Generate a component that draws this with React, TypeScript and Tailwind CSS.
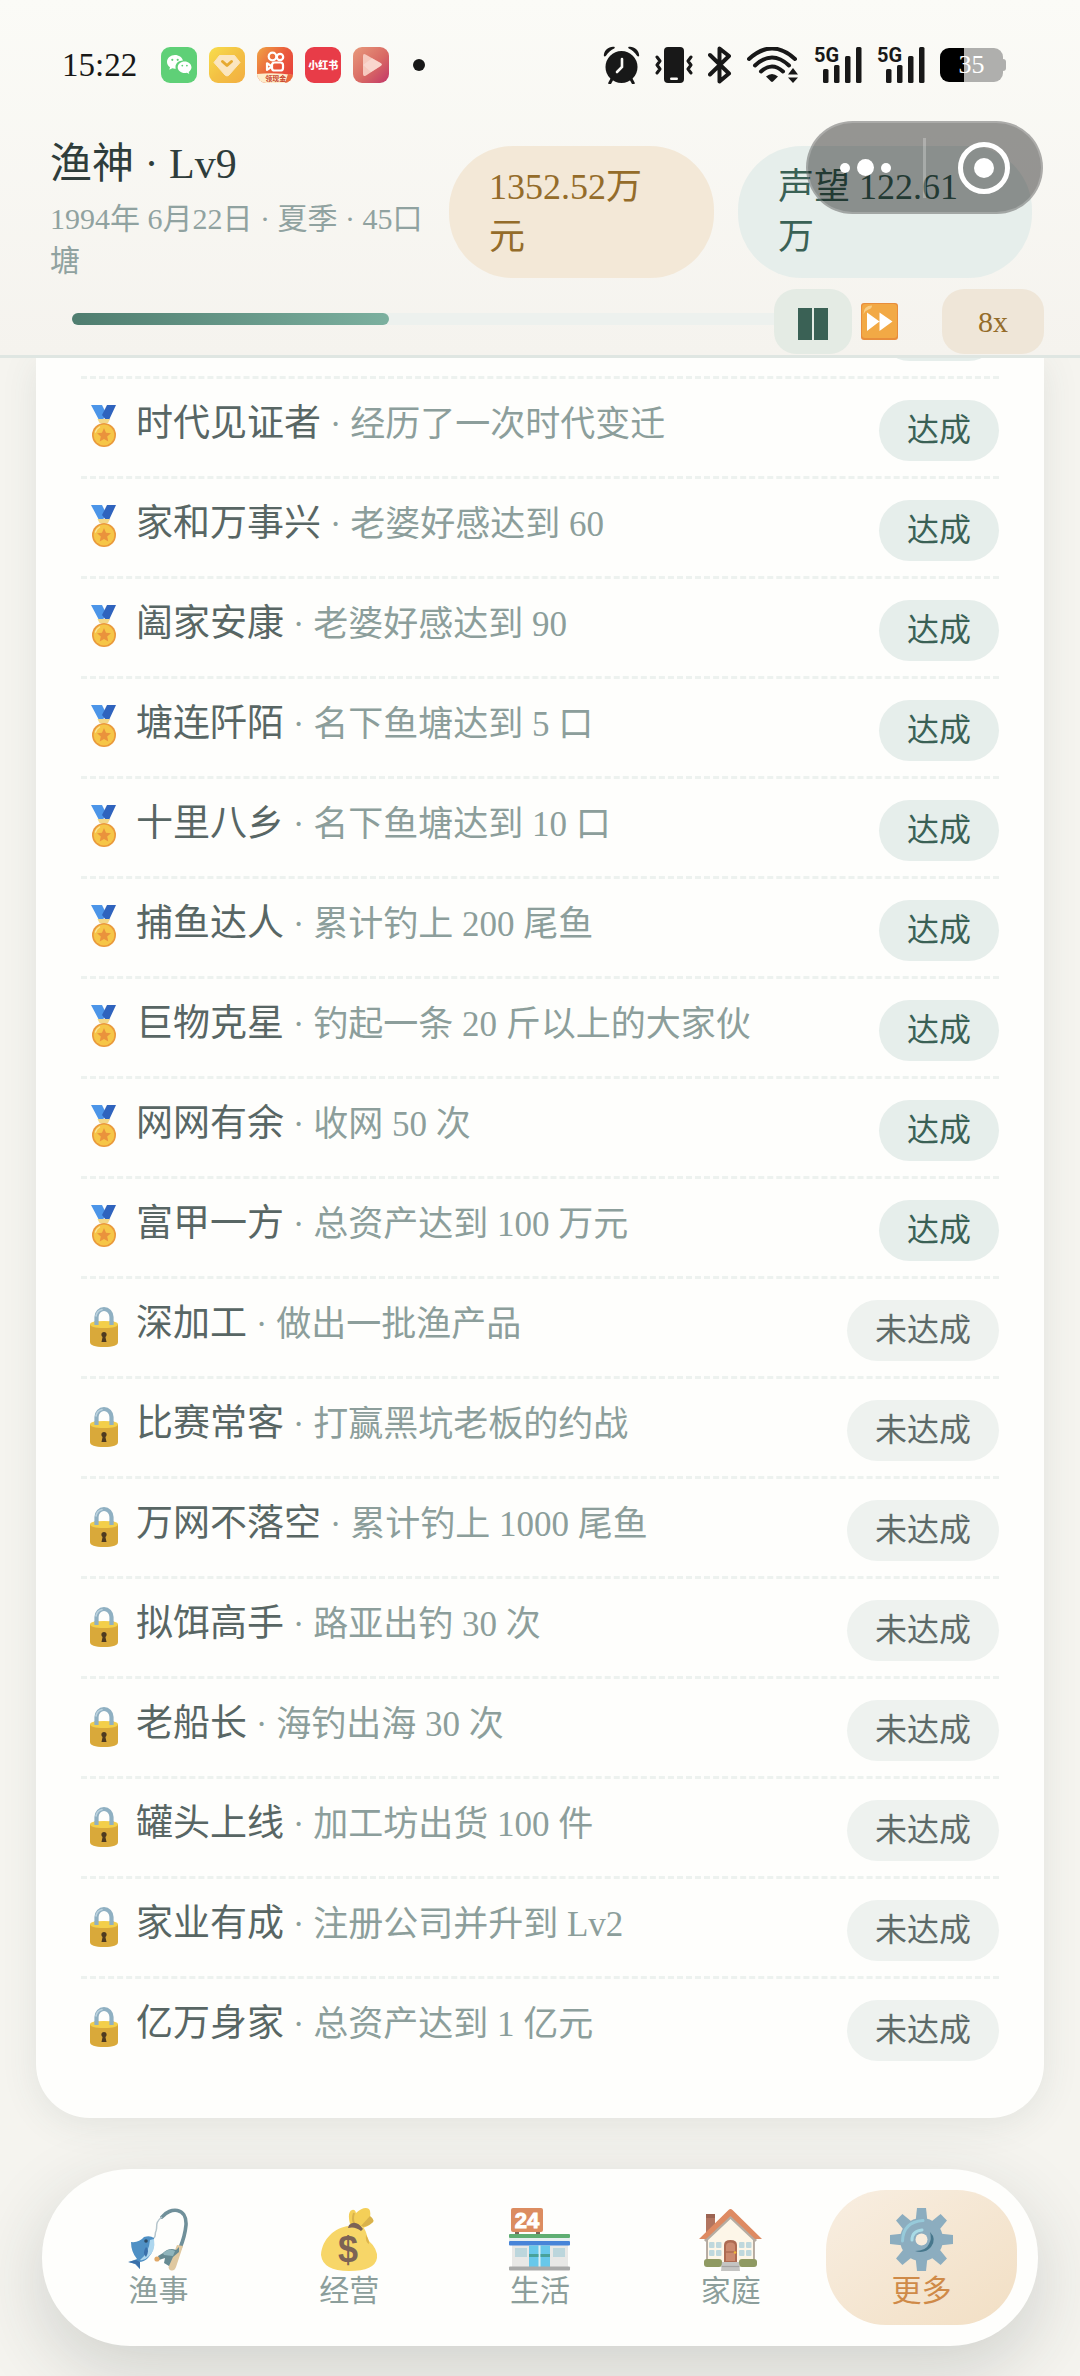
import type { ReactNode } from "react";

type Achievement = {
  name: string;
  desc: string;
  done: boolean;
};

const achievements: Achievement[] = [
  { name: "时代见证者", desc: "经历了一次时代变迁", done: true },
  { name: "家和万事兴", desc: "老婆好感达到 60", done: true },
  { name: "阖家安康", desc: "老婆好感达到 90", done: true },
  { name: "塘连阡陌", desc: "名下鱼塘达到 5 口", done: true },
  { name: "十里八乡", desc: "名下鱼塘达到 10 口", done: true },
  { name: "捕鱼达人", desc: "累计钓上 200 尾鱼", done: true },
  { name: "巨物克星", desc: "钓起一条 20 斤以上的大家伙", done: true },
  { name: "网网有余", desc: "收网 50 次", done: true },
  { name: "富甲一方", desc: "总资产达到 100 万元", done: true },
  { name: "深加工", desc: "做出一批渔产品", done: false },
  { name: "比赛常客", desc: "打赢黑坑老板的约战", done: false },
  { name: "万网不落空", desc: "累计钓上 1000 尾鱼", done: false },
  { name: "拟饵高手", desc: "路亚出钓 30 次", done: false },
  { name: "老船长", desc: "海钓出海 30 次", done: false },
  { name: "罐头上线", desc: "加工坊出货 100 件", done: false },
  { name: "家业有成", desc: "注册公司并升到 Lv2", done: false },
  { name: "亿万身家", desc: "总资产达到 1 亿元", done: false },
];

const dayProgress = 44;

/* ---------- Status bar ---------- */

function WeChatIcon() {
  return (
    <svg viewBox="0 0 36 36" className="w-9 h-9">
      <rect width="36" height="36" rx="9" fill="#5fd077" />
      <path d="M14 8C9.500 8 6 11 6 14.900c0 2.200 1.200 4.100 3 5.400l-.7 2.500 3-1.500c.9.200 1.800.4 2.700.4h.8c-.2-.6-.3-1.200-.3-1.800 0-3.600 3.400-6.400 7.400-6.400C21.100 10.300 17.900 8 14 8z" fill="#fff" />
      <path d="M30.500 20.300c0-3.200-3.200-5.800-6.900-5.800s-6.900 2.600-6.900 5.800 3.200 5.800 6.900 5.800c.8 0 1.600-.1 2.300-.3l2.400 1.300-.6-2.100c1.700-1.200 2.800-2.800 2.800-4.700z" fill="#fff" />
      <g fill="#5fd077">
        <circle cx="11.300" cy="12.800" r="1.100" />
        <circle cx="16.700" cy="12.800" r="1.100" />
        <circle cx="21.300" cy="18.600" r="0.900" />
        <circle cx="25.900" cy="18.600" r="0.900" />
      </g>
    </svg>
  );
}

function DiamondIcon() {
  return (
    <svg viewBox="0 0 36 36" className="w-9 h-9">
      <defs>
        <linearGradient id="diamondBg" x1="0" y1="0" x2="1" y2="1">
          <stop offset="0" stopColor="#f8de4c" />
          <stop offset="0.500" stopColor="#f3c144" />
          <stop offset="1" stopColor="#f3ae42" />
        </linearGradient>
      </defs>
      <rect width="36" height="36" rx="9" fill="url(#diamondBg)" />
      <path d="M10.500 8.500h15l5.500 7-11 12.500q-2 2-4 0L5 15.500z" fill="#fbe6c0" stroke="#fbe6c0" strokeLinejoin="round" />
      <path d="M13.500 14.500l4.500 4 4.500-4" fill="none" stroke="#e6a930" strokeWidth="3" strokeLinecap="round" strokeLinejoin="round" />
    </svg>
  );
}

function KuaishouIcon() {
  return (
    <span className="relative block w-9 h-9 rounded-[9px] overflow-hidden">
      <svg viewBox="0 0 36 36" className="w-9 h-9">
        <defs>
          <linearGradient id="ksBg" x1="0" y1="0" x2="1" y2="0.700">
            <stop offset="0" stopColor="#f0a544" />
            <stop offset="0.600" stopColor="#ea5a3c" />
            <stop offset="1" stopColor="#e8433c" />
          </linearGradient>
        </defs>
        <rect width="36" height="36" fill="url(#ksBg)" />
        <g fill="none" stroke="#fff" strokeWidth="2.200">
          <circle cx="15.500" cy="9.500" r="3.800" />
          <circle cx="23" cy="10" r="3.200" />
          <rect x="15" y="15.500" width="11" height="8" rx="2.600" />
          <path d="M15 19.500l-5-3.200v6.600z" strokeLinejoin="round" />
        </g>
        <path d="M0 27q18-2 36 1v8H0z" fill="#fdeccb" />
        <path d="M28 36l3-9 5 1v8z" fill="#ea6a3a" />
      </svg>
      <span className="absolute bottom-0 left-2 text-[7px] leading-[8px] font-bold text-[#c8452d]">领现金</span>
    </span>
  );
}

function RedNoteIcon() {
  return (
    <span className="flex items-center justify-center w-9 h-9 rounded-[9px] bg-[#e83c48] text-white text-[10px] leading-none font-black whitespace-nowrap font-['Noto_Sans_CJK_SC',sans-serif]">
      小红书
    </span>
  );
}

function PlayerIcon() {
  return (
    <svg viewBox="0 0 36 36" className="w-9 h-9">
      <defs>
        <linearGradient id="playBg" x1="0" y1="0" x2="1" y2="1">
          <stop offset="0" stopColor="#e89a7c" />
          <stop offset="0.550" stopColor="#d96a64" />
          <stop offset="1" stopColor="#c23668" />
        </linearGradient>
      </defs>
      <rect width="36" height="36" rx="9" fill="url(#playBg)" />
      <path d="M10 9q0-3 2.600-1.500L28 16.300q1.800 1.200 0 2.500L13 28.500Q10 30 10 27z" fill="#f6c9be" />
      <path d="M10 18L19 11.300l9 5q1.800 1.200 0 2.500L18 25z" fill="#fbe0d8" opacity="0.600" />
    </svg>
  );
}

function AlarmIcon() {
  return (
    <svg viewBox="0 0 37 38" className="w-[37px] h-[38px]">
      <circle cx="18.500" cy="21" r="16" fill="#181818" />
      <path d="M.8 9.500C1 4 6 .2 11 .8 12 1 12 2 11.200 2.500 8 4 5 6.500 3 9.700c-.8 1-2 .9-2.200-.2zM36.200 9.500C36 4 31 .2 26 .8c-1 .2-1 1.200-.2 1.700 3.200 1.500 6.200 4 8.200 7.200.8 1 2 .9 2.200-.2z" fill="#181818" />
      <path d="M9 33l-2.200 4M28 33l2.200 4" stroke="#181818" strokeWidth="3" strokeLinecap="round" />
      <path d="M19 13v8l-5 5" fill="none" stroke="#fbfaf7" strokeWidth="2.600" strokeLinecap="round" />
    </svg>
  );
}

function VibrateIcon() {
  return (
    <svg viewBox="0 0 38 36" className="w-[38px] h-9">
      <rect x="9" width="20" height="36" rx="4" fill="#181818" />
      <rect x="15" y="30.500" width="8" height="2.400" rx="1.200" fill="#fbfaf7" />
      <path d="M2 10l3 4-3 4 3 4-3 4M36 10l-3 4 3 4-3 4 3 4" fill="none" stroke="#181818" strokeWidth="3" strokeLinecap="round" strokeLinejoin="round" />
    </svg>
  );
}

function BluetoothIcon() {
  return (
    <svg viewBox="0 0 24 38" className="w-6 h-[38px]">
      <path d="M2 9l19 18.500-9.500 8V2.500L21 10 2 28.500" fill="none" stroke="#181818" strokeWidth="4" strokeLinecap="round" strokeLinejoin="round" />
    </svg>
  );
}

function WifiIcon() {
  return (
    <svg viewBox="0 0 52 36" className="w-[52px] h-9">
      <g fill="none" stroke="#181818" strokeWidth="4" strokeLinecap="round">
        <path d="M2 12Q25-9 48 12" />
        <path d="M8 18.500Q25 2.500 42 18.500" />
        <path d="M14 24.500Q25 14.500 36 24.500" />
      </g>
      <path d="M19 29.500q6-5 12 0l-5 5q-1 .9-2 0z" fill="#181818" />
      <path d="M46 21l5 6.500H41zM46 36l5-5.500H41z" fill="#181818" />
    </svg>
  );
}

function SignalIcon() {
  return (
    <span className="relative block w-12 h-9">
      <svg viewBox="0 0 48 36" className="w-12 h-9" fill="#181818">
        <rect x="9" y="22" width="5.500" height="14" rx="1.500" />
        <rect x="20" y="18" width="5.500" height="18" rx="1.500" />
        <rect x="31" y="9" width="5.500" height="27" rx="1.500" />
        <rect x="42" y="0" width="5.500" height="36" rx="1.500" />
      </svg>
      <span className="absolute left-0 -top-px text-[20px] leading-[18px] font-bold text-[#181818] font-['Roboto',sans-serif]">5G</span>
    </span>
  );
}

function Battery() {
  return (
    <div className="flex items-center">
      <div className="flex items-center justify-center w-[63px] h-[34px] rounded-[9px] bg-[linear-gradient(90deg,#000_38%,#afafad_38%)] text-white text-[26px] leading-none">
        35
      </div>
      <div className="w-[3px] h-3 rounded-r-sm bg-[#afafad]" />
    </div>
  );
}

function StatusBar() {
  return (
    <div className="flex items-center justify-between h-[130px] pl-[62px] pr-[74px] text-[#181818]">
      <div className="flex items-center">
        <span className="text-[33px] leading-9">15:22</span>
        <div className="flex items-center gap-3 ml-6">
          <WeChatIcon />
          <DiamondIcon />
          <KuaishouIcon />
          <RedNoteIcon />
          <PlayerIcon />
        </div>
        <span className="w-3 h-3 ml-6 rounded-full bg-[#181818]" />
      </div>
      <div className="flex items-center gap-[15px]">
        <AlarmIcon />
        <VibrateIcon />
        <BluetoothIcon />
        <WifiIcon />
        <SignalIcon />
        <SignalIcon />
        <Battery />
      </div>
    </div>
  );
}

/* Floating mini program controls, sits on top of the header */
function Capsule() {
  return (
    <div className="absolute top-[121px] right-[37px] flex items-center w-[237px] h-[93px] rounded-full border-2 border-white/20 bg-black/40">
      <button type="button" aria-label="菜单" className="flex flex-1 items-center justify-center gap-[7px] h-full">
        <span className="w-[10px] h-[10px] rounded-full bg-white" />
        <span className="w-[17px] h-[17px] rounded-full bg-white" />
        <span className="w-[10px] h-[10px] rounded-full bg-white" />
      </button>
      <span className="w-[3px] h-[60px] bg-white/25" />
      <button type="button" aria-label="关闭" className="flex flex-1 items-center justify-center h-full">
        <span className="flex items-center justify-center w-[52px] h-[52px] rounded-full border-[5px] border-white">
          <span className="w-5 h-5 rounded-full bg-white" />
        </span>
      </button>
    </div>
  );
}

/* ---------- Header ---------- */

function Header() {
  return (
    <header className="relative z-10 bg-linear-to-b from-[#fbfbf7] to-[#f5f3ee] border-b-[3px] border-[#dfe6e2]">
      <StatusBar />
      <div className="flex items-start gap-6 pt-2 pl-[50px] pr-12">
        <div className="flex-1 min-w-0">
          <h1 className="text-[42px] leading-[52px] text-[#2f3d3b]">渔神 · Lv9</h1>
          <p className="mt-2 text-[30px] leading-[42px] text-[#90a2a0]">1994年 6月22日 · 夏季 · 45口塘</p>
        </div>
        <div className="w-[265px] mt-2 px-10 py-4 rounded-[64px] bg-[#f3e8d7] text-[36px] leading-[50px] text-[#946c2a]">
          1352.52万元
        </div>
        <div className="w-[294px] mt-2 px-10 py-4 rounded-[64px] bg-[#e6eeeb] text-[36px] leading-[50px] text-[#3a6155]">
          声望 122.61万
        </div>
      </div>
      <div className="flex items-start h-[65px] mt-[7px] mb-px pl-[72px] pr-9">
        <div className="flex-1 h-3 mt-6 -mr-[18px] rounded-full bg-[#edf1ee]">
          <div
            className="h-full rounded-full bg-linear-to-r from-[#4f7d6f] to-[#7cb09f]"
            style={{ width: `${dayProgress}%` }}
          />
        </div>
        <button type="button" aria-label="暂停" className="flex items-center justify-center gap-[2px] w-[78px] h-[65px] pt-1 rounded-[22px] bg-[#e4ebe4]">
          <span className="w-[14px] h-8 bg-[#3a6155]" />
          <span className="w-[14px] h-8 bg-[#3a6155]" />
        </button>
        <button type="button" aria-label="快进" className="flex items-center justify-center w-[55px] h-[65px]">
          <svg viewBox="0 0 37 37" className="w-[37px] h-[37px]">
            <rect width="37" height="37" rx="3" fill="#e88d3c" />
            <rect x="1" y="1" width="35" height="34" rx="3" fill="#f2a945" />
            <path d="M2.500 11Q2.500 2.500 11 2.500q0 3-3.500 4T2.500 11z" fill="#f9cd84" />
            <path d="M6 9.500l12.500 9L6 28zM18.500 9.500l13 9-13 9.500z" fill="#fff" />
          </svg>
        </button>
        <button type="button" className="w-[102px] h-[65px] ml-[35px] rounded-[22px] bg-[#efe6d8] text-[30px] leading-[65px] text-[#946c2a]">
          8x
        </button>
      </div>
      <Capsule />
    </header>
  );
}

/* ---------- Achievements ---------- */

function Medal() {
  return (
    <svg viewBox="0 0 28 42" className="w-7 h-[42px]">
      <path d="M1 0h11l4 8-3 7h-4z" fill="#4c95e8" />
      <path d="M17 0h9l-7 15h-3l-4-5z" fill="#2f63bd" />
      <path d="M7.500 14h12.500l-2 4H9.500z" fill="#f3d98a" />
      <circle cx="14" cy="30" r="12" fill="#ea9a3c" />
      <circle cx="14" cy="30" r="10.400" fill="#f6c648" />
      <path d="M14 23l2 4.700 5 .5-3.800 3.400 1.100 5-4.300-2.600-4.300 2.600 1.100-5L7 28.200l5-.5z" fill="#ea923c" />
      <path d="M5.500 27a9 9 0 0 1 4-5" fill="none" stroke="#fae39a" strokeWidth="1.400" strokeLinecap="round" />
    </svg>
  );
}

function Lock() {
  return (
    <svg viewBox="0 0 28 42" className="w-7 h-[42px]">
      <path d="M6.500 22V12a7.500 8 0 0 1 15 0v10" fill="none" stroke="#8fb0c2" strokeWidth="4.200" />
      <path d="M6 11a8 8 0 0 1 6-6.500" fill="none" stroke="#bcd2de" strokeWidth="1.600" strokeLinecap="round" />
      <path d="M0 19h28v18q0 5-14 5T0 37z" fill="#d9a93a" />
      <path d="M0 19q0-3 14-3t14 3q0 4-14 4T0 19z" fill="#f3cf4a" />
      <path d="M6.500 16v4M21.500 16v4" stroke="#8fb0c2" strokeWidth="4.200" />
      <circle cx="14" cy="29.500" r="2.600" fill="#4e3a20" />
      <path d="M13 30h2l1.500 7h-5z" fill="#4e3a20" />
    </svg>
  );
}

function AchievementRow({ name, desc, done }: Achievement) {
  return (
    <li className="flex items-start pt-[21px] pb-[15px] pl-[9px] border-b-[3px] border-dashed border-[#edf2ef] last:border-b-0">
      <span className="mt-[5px]">{done ? <Medal /> : <Lock />}</span>
      <p className="flex-1 ml-[18px] text-[37px] leading-[48px] text-[#586664]">
        {name}
        <span className="text-[35px] text-[#8c9e9b]"> · {desc}</span>
      </p>
      {done ? (
        <span className="px-7 py-2 rounded-full bg-[#e6eeeb] text-[32px] leading-[45px] text-[#3a6155]">达成</span>
      ) : (
        <span className="px-7 py-2 rounded-full bg-[#eef2ef] text-[32px] leading-[45px] text-[#5d6a68]">未达成</span>
      )}
    </li>
  );
}

/* ---------- Bottom nav ---------- */

function FishingIcon() {
  return (
    <svg viewBox="0 0 63 63" className="w-[63px] h-[63px]">
      <path d="M35 9C43-1 60-1 59 17q-1 11-6 23" fill="none" stroke="#70909a" strokeWidth="3.600" strokeLinecap="round" />
      <path d="M35 9c-8 6-4 9-6 14-2 4 1 5-3 8" fill="none" stroke="#b5c5cc" strokeWidth="1.500" />
      <path d="M50 37l6 1-7 21q-2 5-6 3-2-1-1-5z" fill="#dfc8a0" />
      <path d="M36 45q6-6 13-3l3-3v5l-6 5-4 9-5-3 1-5-6 2-1-4z" fill="#668a92" />
      <path d="M36 45q6-6 12-2l-2 5-9-1z" fill="#8fb4bb" />
      <circle cx="30" cy="51" r="2.600" fill="#e0a868" />
      <path d="M4 34q8 1 13-5 6-2 10 1 1 13-6 20-4 4-9 4l1 7-5-5-6-2 8-3Q4 44 4 34z" fill="#4f90c4" />
      <path d="M27 31q2 12-6 18-4 4-8 3 9-7 10-20z" fill="#add6ee" />
      <circle cx="19" cy="33" r="1.800" fill="#2c4a63" />
      <path d="M19 39q4 3 0 10-4-4 0-10z" fill="#3a70aa" />
      <path d="M9 52l4 2v7l-4-5-8-2z" fill="#3a70aa" />
    </svg>
  );
}

function MoneyIcon() {
  return (
    <svg viewBox="0 0 63 63" className="w-[63px] h-[63px]">
      <path d="M32 16q-3-12 2-14 3-1 4 3Q46-2 51 1q2 2 1 8 5 3 3 5-6 6-13 6z" fill="#f4cf58" />
      <path d="M42 19l10-11q4 3 3 6-5 5-13 5z" fill="#d9b24c" />
      <path d="M36 5q-2 6 0 10" stroke="#d9b24c" strokeWidth="2" fill="none" />
      <path d="M31 18h13q4 3 6 14 10 9 9 18-2 13-28 13T3 47C4 31 17 19 31 18z" fill="#f7d668" />
      <path d="M31 17q7-6 14 4l-2 2q-6-5-13-3z" fill="#7c6355" />
      <path d="M48 27q4 6 3 9-4-2-3-9z" fill="#e0b64c" />
      <text x="30" y="54" textAnchor="middle" fontFamily="Liberation Sans" fontWeight="700" fontSize="36" fill="#7c6355">$</text>
    </svg>
  );
}

function StoreIcon() {
  return (
    <svg viewBox="0 0 63 63" className="w-[63px] h-[63px]">
      <rect x="7" y="22" width="4" height="6" fill="#7a6658" />
      <rect x="28" y="22" width="4" height="6" fill="#7a6658" />
      <rect x="3" y="0" width="32" height="24" rx="2" fill="#dc8c60" />
      <text x="19" y="20" textAnchor="middle" fontFamily="Liberation Sans" fontWeight="700" fontSize="22" stroke="#fff" strokeWidth="1" fill="#fff">24</text>
      <rect x="4" y="34" width="56" height="25" fill="#e8e8e6" />
      <rect x="1" y="26" width="61" height="4" rx="1" fill="#5fae72" />
      <rect x="1" y="30" width="61" height="3" fill="#e6efef" />
      <rect x="1" y="33" width="61" height="4.500" rx="1" fill="#4784d8" />
      <rect x="7" y="40" width="12" height="9" fill="#bcd6dc" />
      <rect x="45" y="40" width="12" height="9" fill="#bcd6dc" />
      <rect x="21" y="37.500" width="21" height="22" fill="#68c8ea" />
      <rect x="30.500" y="37.500" width="2" height="22" fill="#dfeff2" />
      <rect x="21" y="46" width="9.500" height="3" fill="#48a29a" />
      <rect x="32.500" y="46" width="9.500" height="3" fill="#48a29a" />
      <rect x="1" y="58.500" width="61" height="4" rx="1" fill="#a9aaa9" />
    </svg>
  );
}

function HouseIcon() {
  return (
    <svg viewBox="0 0 63 63" className="w-[63px] h-[63px]">
      <rect x="7" y="6" width="9" height="22" fill="#b27560" />
      <rect x="7" y="6" width="9" height="4" fill="#9c6452" />
      <path d="M8 30L31.500 8 55 30v27H8z" fill="#fdf6e8" />
      <path d="M8 32v22M55 32v22" stroke="#8a7a6e" strokeWidth="1.200" />
      <path d="M6 33L31.500 9 57 33" fill="none" stroke="#b4aca2" strokeWidth="3" />
      <path d="M0 31L29.500 2q2-2 4 0L63 31h-7L31.500 8 7 31z" fill="#de8a62" />
      <g fill="#bfd8dd">
        <rect x="10" y="34" width="5.500" height="6" rx="1" />
        <rect x="17" y="34" width="5.500" height="6" rx="1" />
        <rect x="10" y="42" width="5.500" height="6" rx="1" />
        <rect x="17" y="42" width="5.500" height="6" rx="1" />
        <rect x="40" y="34" width="5.500" height="6" rx="1" />
        <rect x="47" y="34" width="5.500" height="6" rx="1" />
        <rect x="40" y="42" width="5.500" height="6" rx="1" />
        <rect x="47" y="42" width="5.500" height="6" rx="1" />
      </g>
      <path d="M25 54V37q0-5 6.500-5t6.500 5v17z" fill="#ad6a52" />
      <path d="M27 53V38q0-3.500 4.500-3.500T36 38v15z" fill="#cb8a70" />
      <path d="M27 44h9" stroke="#ad6a52" strokeWidth="1.400" />
      <circle cx="36" cy="44.500" r="1.300" fill="#f0b838" />
      <rect x="5" y="51" width="18" height="8" rx="3" fill="#8f9a62" />
      <rect x="40" y="51" width="18" height="8" rx="3" fill="#8f9a62" />
      <path d="M23 54h17l1 9H22z" fill="#c4c4c2" />
      <path d="M22.500 58.500h18" stroke="#a4a4a2" strokeWidth="1.200" />
    </svg>
  );
}

function GearIcon() {
  const teeth = [0, 45, 90, 135, 180, 225, 270, 315];
  return (
    <svg viewBox="0 0 63 63" className="w-[63px] h-[63px]">
      <g fill="#8cadbf">
        {teeth.map((deg) => (
          <path key={deg} d="M27 0h9l1.500 14h-12z" transform={`rotate(${deg} 31.500 31.500)`} />
        ))}
      </g>
      <circle cx="31.500" cy="31.500" r="13.500" fill="none" stroke="#8cadbf" strokeWidth="16" />
      <path d="M12.500 33Q13 14 33 12.500" fill="none" stroke="#97cada" strokeWidth="3" strokeLinecap="round" />
      <path d="M22 32q0-9 10-10" fill="none" stroke="#a9dbe6" strokeWidth="3" strokeLinecap="round" />
      <path d="M40 24q7 7 1 15-6 7-16 4 11 0 14-7 3-5 1-12z" fill="#47778c" />
      <circle cx="31.500" cy="31.500" r="6" fill="#f8ecdc" />
    </svg>
  );
}

const tabs: { label: string; icon: ReactNode; active?: boolean }[] = [
  { label: "渔事", icon: <FishingIcon /> },
  { label: "经营", icon: <MoneyIcon /> },
  { label: "生活", icon: <StoreIcon /> },
  { label: "家庭", icon: <HouseIcon /> },
  { label: "更多", icon: <GearIcon />, active: true },
];

function BottomNav() {
  return (
    <nav className="relative z-10 flex mx-[42px] mt-auto mb-[30px] p-[21px] rounded-[88px] bg-[#fefefc] shadow-[0_24px_72px_rgba(40,50,50,0.18)]">
      {tabs.map((tab) => (
        <button
          key={tab.label}
          type="button"
          aria-current={tab.active ? "page" : undefined}
          className={
            tab.active
              ? "flex-1 flex flex-col items-center gap-[2px] pt-[18px] pb-4 rounded-[60px] bg-linear-to-br from-[#f8eee1] to-[#f2dfc4] text-[#cf8a48]"
              : "flex-1 flex flex-col items-center gap-[2px] pt-[18px] pb-4 rounded-[60px] text-[#8c9e9b]"
          }
        >
          {tab.icon}
          <span className="text-[30px] leading-9">{tab.label}</span>
        </button>
      ))}
    </nav>
  );
}

export default function App() {
  return (
    <div
      lang="zh-CN"
      className="flex flex-col min-h-screen overflow-hidden bg-[#f5f4ef] font-['Liberation_Serif','Noto_Sans_CJK_SC',serif]"
    >
      <Header />
      <main className="px-9 pb-[51px]">
        <section className="px-[45px] pb-[42px] rounded-b-[54px] bg-[#fefefc] shadow-[0_6px_36px_rgba(60,80,75,0.10)]">
          <ul>
            {/* tail of the row scrolled under the header */}
            <li aria-hidden="true" className="flex items-end justify-end h-[21px] pb-[15px] overflow-hidden border-b-[3px] border-dashed border-[#edf2ef]">
              <span className="w-[120px] h-[61px] shrink-0 rounded-full bg-[#e6eeeb]" />
            </li>
            {achievements.map((item) => (
              <AchievementRow key={item.name} {...item} />
            ))}
          </ul>
        </section>
      </main>
      <BottomNav />
    </div>
  );
}
